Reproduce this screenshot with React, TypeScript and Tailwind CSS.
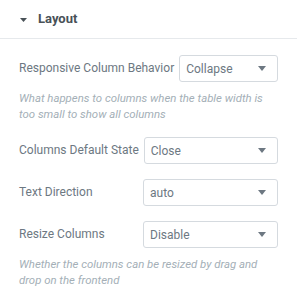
type Control = {
  label: string
  value: string
  help?: string
}

const controls: Control[] = [
  {
    label: 'Responsive Column Behavior',
    value: 'Collapse',
    help: 'What happens to columns when the table width is too small to show all columns',
  },
  { label: 'Columns Default State', value: 'Close' },
  { label: 'Text Direction', value: 'auto' },
  {
    label: 'Resize Columns',
    value: 'Disable',
    help: 'Whether the columns can be resized by drag and drop on the frontend',
  },
]

function Caret() {
  return (
    <svg width="8" height="5" viewBox="0 0 8 5" className="shrink-0">
      <path d="M0 0h8L4 5z" fill="#6d7882" />
    </svg>
  )
}

function SelectBox({ value }: { value: string }) {
  return (
    <div className="ml-[5px] flex h-[27px] w-[135px] min-w-0 items-center justify-between rounded-[3px] border border-[#d5dadf] bg-white pl-[6px] pr-[11px] text-[12px] text-[#6d7882]">
      <span className="truncate">{value}</span>
      <Caret />
    </div>
  )
}

export default function App() {
  return (
    <div
      className="w-[297px] bg-white text-[#6d7882]"
      style={{ fontFamily: 'Roboto, "Liberation Sans", sans-serif' }}
    >
      {/* Section header */}
      <div className="flex h-[39px] items-center border-b border-[#e6e9ec] pl-[20px]">
        <svg width="7" height="4" viewBox="0 0 7 4" className="mt-px">
          <path d="M0 0h7L3.5 4z" fill="#495157" />
        </svg>
        <span className="ml-[11px] text-[13px] font-bold text-[#495157]">
          Layout
        </span>
      </div>

      <div className="flex flex-col gap-[15px] border-b border-[#e6e9ec] px-[19px] pb-[22px] pt-[16px]">
        {controls.map((c) => (
          <div key={c.label}>
            <div className="flex items-center">
              <span className="shrink-0 whitespace-nowrap text-[12px] leading-[15px]">
                {c.label}
              </span>
              <div className="ml-auto flex min-w-0 shrink">
                <SelectBox value={c.value} />
              </div>
            </div>
            {c.help && (
              <p className="mt-[9px] pr-[12px] text-[11.4px] italic leading-[15.5px] text-[#a4afb7]">
                {c.help}
              </p>
            )}
          </div>
        ))}
      </div>
    </div>
  )
}
